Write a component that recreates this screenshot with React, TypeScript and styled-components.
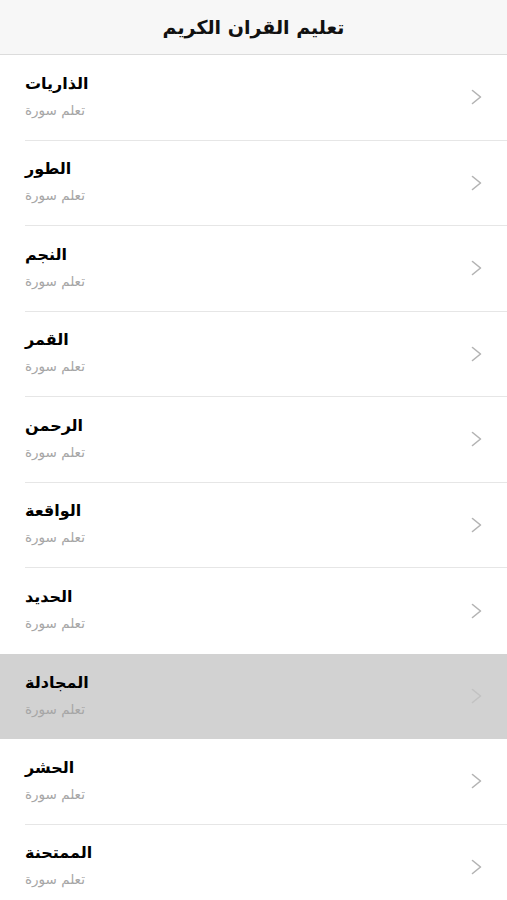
import React from "react";
import styled, { createGlobalStyle } from "styled-components";

const GlobalStyle = createGlobalStyle`
  html, body {
    margin: 0;
    padding: 0;
    background: #ffffff;
  }
  body {
    font-family: "DejaVu Sans", "Noto Sans", sans-serif;
  }
`;

const surahs = [
  "الذاريات",
  "الطور",
  "النجم",
  "القمر",
  "الرحمن",
  "الواقعة",
  "الحديد",
  "المجادلة",
  "الحشر",
  "الممتحنة",
];

const Screen = styled.div`
  width: 507px;
  height: 900px;
  overflow: hidden;
  background: #ffffff;
`;

const NavBar = styled.header`
  height: 54px;
  background: #f7f7f7;
  border-bottom: 1px solid #dcdcdc;
  display: flex;
  align-items: center;
  justify-content: center;
`;

const NavTitle = styled.h1`
  margin: 0;
  font-size: 19px;
  font-weight: 700;
  color: #111111;
  direction: rtl;
`;

const List = styled.ul`
  list-style: none;
  margin: 0;
  padding: 0;
`;

const Row = styled.li<{ $active?: boolean }>`
  height: 85.5px;
  display: flex;
  padding-left: 25px;
  background: ${({ $active }) => ($active ? "#d2d2d2" : "#ffffff")};
`;

const RowInner = styled.div<{ $last?: boolean }>`
  flex: 1;
  height: 100%;
  display: flex;
  align-items: center;
  justify-content: space-between;
  padding-right: 24px;
  border-bottom: ${({ $last }) => ($last ? "none" : "1px solid #e6e6e6")};
  box-sizing: border-box;
`;

// rtl column: flex-end puts both lines on the left edge
const Texts = styled.div`
  display: flex;
  flex-direction: column;
  align-items: flex-end;
  gap: 9px;
  direction: rtl;
  margin-top: -3px;
`;

const Name = styled.span`
  font-size: 16px;
  font-weight: 700;
  color: #000000;
`;

const Sub = styled.span`
  font-size: 13.5px;
  color: #a6a6a6;
`;

const Chevron = ({ active }: { active?: boolean }) => (
  <svg width="12" height="16" viewBox="0 0 12 16">
    <path
      d="M1.5 1.5 L9.5 8 L1.5 14.5"
      fill="none"
      stroke={active ? "#c2c2c2" : "#b3b3b3"}
      strokeWidth="1.6"
      strokeLinecap="round"
      strokeLinejoin="round"
    />
  </svg>
);

export default function App() {
  const activeIndex = 7;
  return (
    <Screen>
      <GlobalStyle />
      <NavBar>
        <NavTitle>تعليم القران الكريم</NavTitle>
      </NavBar>
      <List>
        {surahs.map((name, i) => {
          const active = i === activeIndex;
          return (
            <Row key={name} $active={active}>
              <RowInner $last={active || i === activeIndex - 1}>
                <Texts>
                  <Name>{name}</Name>
                  <Sub>تعلم سورة</Sub>
                </Texts>
                <Chevron active={active} />
              </RowInner>
            </Row>
          );
        })}
      </List>
    </Screen>
  );
}
